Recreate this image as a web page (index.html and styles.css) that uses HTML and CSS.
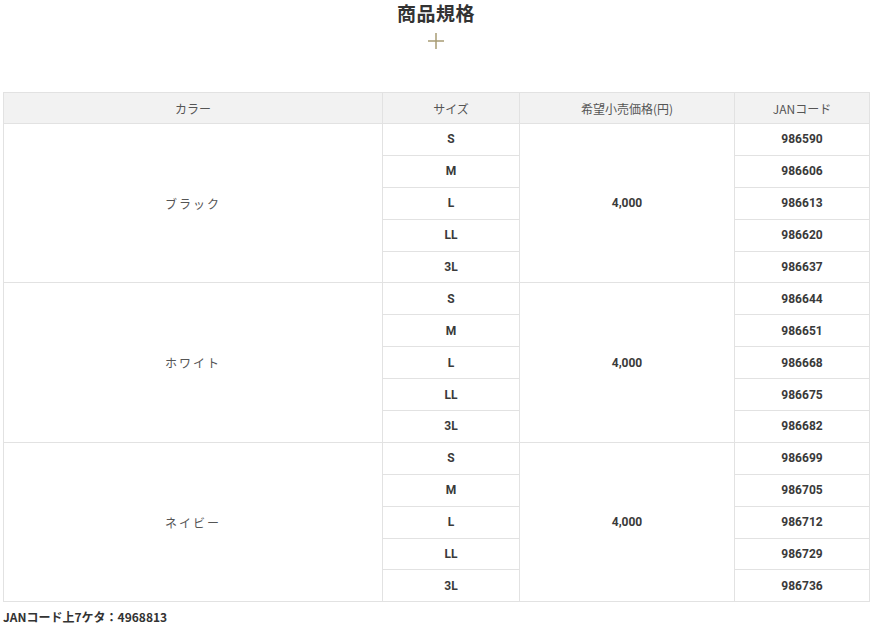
FILE: index.html
```html
<!DOCTYPE html>
<html lang="ja">
<head>
<meta charset="utf-8">
<link rel="stylesheet" href="styles.css">
</head>
<body>
<div class="page">
  <h2 class="title">商品規格</h2>
  <div class="plus"><svg width="16" height="16" viewBox="0 0 16 16"><path d="M8 0V16M0 8H16" stroke="#a89c74" stroke-width="1.5"/></svg></div>
  <table class="spec">
    <colgroup><col class="c1"><col class="c2"><col class="c3"><col class="c4"></colgroup>
    <thead>
      <tr><th>カラー</th><th>サイズ</th><th>希望小売価格(円)</th><th>JANコード</th></tr>
    </thead>
    <tbody>
      <tr><td rowspan="5" class="jp">ブラック</td><td class="num">S</td><td rowspan="5" class="num">4,000</td><td class="num">986590</td></tr>
      <tr><td class="num">M</td><td class="num">986606</td></tr>
      <tr><td class="num">L</td><td class="num">986613</td></tr>
      <tr><td class="num">LL</td><td class="num">986620</td></tr>
      <tr><td class="num">3L</td><td class="num">986637</td></tr>
      <tr><td rowspan="5" class="jp">ホワイト</td><td class="num">S</td><td rowspan="5" class="num">4,000</td><td class="num">986644</td></tr>
      <tr><td class="num">M</td><td class="num">986651</td></tr>
      <tr><td class="num">L</td><td class="num">986668</td></tr>
      <tr><td class="num">LL</td><td class="num">986675</td></tr>
      <tr><td class="num">3L</td><td class="num">986682</td></tr>
      <tr><td rowspan="5" class="jp">ネイビー</td><td class="num">S</td><td rowspan="5" class="num">4,000</td><td class="num">986699</td></tr>
      <tr><td class="num">M</td><td class="num">986705</td></tr>
      <tr><td class="num">L</td><td class="num">986712</td></tr>
      <tr><td class="num">LL</td><td class="num">986729</td></tr>
      <tr><td class="num">3L</td><td class="num">986736</td></tr>
    </tbody>
  </table>
  <p class="note">JANコード上7ケタ：4968813</p>
</div>
</body>
</html>
```
FILE: styles.css
```css
html, body {
  margin: 0;
  padding: 0;
  background: #fff;
}
body {
  font-family: "Noto Sans CJK JP", "Noto Sans", sans-serif;
  color: #333;
}
.page {
  padding: 0 4px 0 3px;
}
.title {
  margin: 0;
  padding-top: 1px;
  text-align: center;
  font-size: 19px;
  line-height: 24px;
  font-weight: 700;
  color: #333;
  letter-spacing: 0.5px;
}
.plus {
  display: flex;
  justify-content: center;
  padding-top: 8px;
  height: 16px;
  margin-bottom: 43px;
}
.spec {
  width: 866px;
  border-collapse: collapse;
  table-layout: fixed;
}
.c1 { width: 379px; }
.c2 { width: 137px; }
.c3 { width: 215px; }
.c4 { width: 135px; }
.spec th, .spec td {
  border: 1px solid #e2e2e2;
  text-align: center;
  padding: 0;
}
.spec th {
  background: #f2f2f2;
  height: 30px;
  font-size: 12px;
  font-weight: 400;
  color: #555;
}
.spec td {
  height: 30.9px;
  font-size: 12px;
}
.spec td.jp {
  color: #555;
  letter-spacing: 2px;
  font-weight: 400;
}
.spec td.num {
  font-family: "Roboto", "Noto Sans", sans-serif;
  font-weight: 700;
  color: #3a3a3a;
  font-size: 12px;
}
.note {
  margin: 6px 0 0 0;
  font-size: 12px;
  font-weight: 700;
  color: #333;
}
```
